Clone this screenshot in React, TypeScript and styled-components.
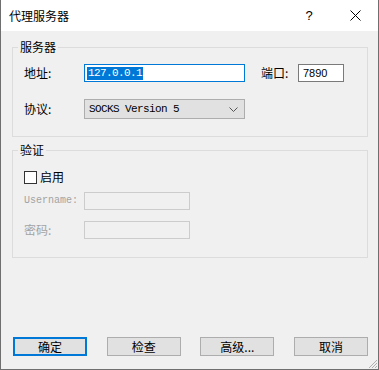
import React from 'react';
import styled, { createGlobalStyle } from 'styled-components';

const GlobalStyle = createGlobalStyle`
  html, body {
    margin: 0;
    padding: 0;
    background: #ffffff;
  }
  * { box-sizing: border-box; }
`;

const cjk = `"Noto Sans CJK SC", "Noto Sans", sans-serif`;
const mono = `"Liberation Mono", "Noto Sans CJK SC", monospace`;

const Window = styled.div`
  position: relative;
  width: 379px;
  height: 370px;
  display: flex;
  flex-direction: column;
  border: 1px solid #6f6f6f;
  border-top: none;
  background: #f0f0f0;
  font-family: ${cjk};
  font-size: 12px;
  color: #000;
`;

const TitleBar = styled.div`
  height: 31px;
  flex: none;
  display: flex;
  align-items: center;
  background: #fff;
  padding-left: 8px;
`;

const Title = styled.div`
  flex: 1;
  font-size: 12px;
  line-height: 16px;
`;

const TitleButton = styled.div<{ w: number }>`
  width: ${p => p.w}px;
  height: 31px;
  display: flex;
  align-items: center;
  justify-content: center;
  font-family: "Liberation Sans", sans-serif;
  font-size: 13px;
`;

const Body = styled.div`
  flex: 1;
  display: flex;
  flex-direction: column;
  padding: 0 10px 0 11px;
`;

const Group = styled.fieldset<{ top: number; bottom: number }>`
  margin: ${p => p.top}px 0 0 0;
  padding: 0 11px ${p => p.bottom}px 11px;
  border: 1px solid #dcdcdc;
  min-width: 0;
`;

const Legend = styled.legend`
  margin-left: -6px;
  padding: 0 2px 0 2px;
  font-size: 12px;
  line-height: 14px;
`;

const Row = styled.div<{ mt: number }>`
  display: flex;
  align-items: center;
  margin-top: ${p => p.mt}px;
`;

const Label = styled.span<{ disabled?: boolean; w?: number; mono?: boolean }>`
  width: ${p => (p.w ? `${p.w}px` : 'auto')};
  flex: none;
  font-family: ${p => (p.mono ? mono : cjk)};
  font-size: ${p => (p.mono ? '10px' : '12px')};
  color: ${p => (p.disabled ? '#a3a3a3' : '#000')};
  line-height: 16px;
`;

const TextBox = styled.div<{ w: number; focused?: boolean; disabled?: boolean }>`
  width: ${p => p.w}px;
  height: 18px;
  flex: none;
  display: flex;
  align-items: center;
  padding-left: 2px;
  background: ${p => (p.disabled ? '#f0f0f0' : '#fff')};
  border: 1px solid ${p => (p.focused ? '#0078d7' : p.disabled ? '#cccccc' : '#7a7a7a')};
`;

const Selected = styled.span`
  background: #0078d7;
  color: #fff;
  font-family: ${mono};
  font-size: 11px;
  letter-spacing: -0.6px;
  line-height: 13px;
  padding: 0 1px;
`;

const PortText = styled.span`
  font-family: "Liberation Sans", sans-serif;
  font-size: 11px;
  padding-left: 2px;
`;

const PortLabel = styled.span`
  margin-left: 16px;
  width: 37px;
  font-size: 12px;
  line-height: 16px;
`;

const Select = styled.div`
  width: 161px;
  height: 20px;
  display: flex;
  align-items: center;
  justify-content: space-between;
  padding: 0 6px 0 4px;
  background: #e1e1e1;
  border: 1px solid #adadad;
  font-family: ${mono};
  font-size: 11px;
  letter-spacing: -0.6px;
`;

const CheckBox = styled.span`
  width: 13px;
  height: 13px;
  flex: none;
  border: 1px solid #333;
  background: #fff;
  margin-right: 3px;
`;

const Spacer = styled.div`
  flex: 1;
`;

const ButtonRow = styled.div`
  display: flex;
  justify-content: space-between;
  padding: 0 0 13px 1px;
`;

const Button = styled.div<{ primary?: boolean }>`
  width: 74px;
  height: 19px;
  display: flex;
  align-items: center;
  justify-content: center;
  background: #e1e1e1;
  border: ${p => (p.primary ? '2px solid #0078d7' : '1px solid #adadad')};
  font-size: 12px;
`;

const Grip = styled.svg`
  position: absolute;
  right: 0;
  bottom: 0;
`;

export default function App() {
  return (
    <>
      <GlobalStyle />
      <Window>
        <TitleBar>
          <Title>代理服务器</Title>
          <TitleButton w={46}>?</TitleButton>
          <TitleButton w={46}>
            <svg width="11" height="11" viewBox="0 0 11 11">
              <path d="M0.5 0.5 L10.5 10.5 M10.5 0.5 L0.5 10.5" stroke="#000" strokeWidth="1" />
            </svg>
          </TitleButton>
        </TitleBar>
        <Body>
          <Group top={9} bottom={17}>
            <Legend>服务器</Legend>
            <Row mt={10}>
              <Label w={60}>地址:</Label>
              <TextBox w={161} focused>
                <Selected>127.0.0.1</Selected>
              </TextBox>
              <PortLabel>端口:</PortLabel>
              <TextBox w={46}>
                <PortText>7890</PortText>
              </TextBox>
            </Row>
            <Row mt={17}>
              <Label w={60}>协议:</Label>
              <Select>
                <span>SOCKS Version 5</span>
                <svg width="9" height="5" viewBox="0 0 9 5">
                  <path d="M0.5 0.5 L4.5 4.5 L8.5 0.5" stroke="#555" fill="none" strokeWidth="1" />
                </svg>
              </Select>
            </Row>
          </Group>
          <Group top={6} bottom={18}>
            <Legend>验证</Legend>
            <Row mt={12}>
              <CheckBox />
              <Label>启用</Label>
            </Row>
            <Row mt={7}>
              <Label w={60} mono disabled>Username:</Label>
              <TextBox w={106} disabled />
            </Row>
            <Row mt={11}>
              <Label w={60} disabled>密码:</Label>
              <TextBox w={106} disabled />
            </Row>
          </Group>
          <Spacer />
          <ButtonRow>
            <Button primary>确定</Button>
            <Button>检查</Button>
            <Button>高级...</Button>
            <Button>取消</Button>
          </ButtonRow>
        </Body>
        <Grip width="12" height="12" viewBox="0 0 12 12">
          <path d="M11 3 L3 11 M11 6 L6 11 M11 9 L9 11" stroke="#b0b0b0" strokeWidth="1" />
        </Grip>
      </Window>
    </>
  );
}
